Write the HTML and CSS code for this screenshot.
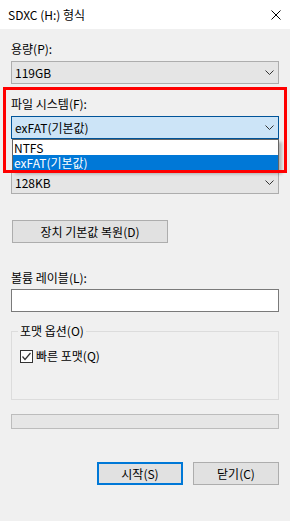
FILE: index.html
```html
<!DOCTYPE html>
<html>
<head>
  <title>SDXC (H:) 형식</title>
  <link rel="stylesheet" href="styles.css">
</head>
<body>
  <div class="window">
    <div class="titlebar">
      <span class="title">SDXC (H:) 형식</span>
      <svg class="close" width="10" height="10" viewBox="0 0 10 10">
        <path d="M0.5 0.5 L9.5 9.5 M9.5 0.5 L0.5 9.5" stroke="#000" stroke-width="1" fill="none"/>
      </svg>
    </div>

    <div class="content">
      <div class="field">
        <label class="field-label">용량(P):</label>
        <div class="combo">
          <span>119GB</span>
          <svg class="arrow" width="9" height="5" viewBox="0 0 9 5"><path d="M0.5 0.5 L4.5 4.5 L8.5 0.5" stroke="#333" fill="none"/></svg>
        </div>
      </div>

      <div class="field">
        <label class="field-label">파일 시스템(F):</label>
        <div class="combo-wrap">
          <div class="combo open">
            <span>exFAT(기본값)</span>
            <svg class="arrow" width="9" height="5" viewBox="0 0 9 5"><path d="M0.5 0.5 L4.5 4.5 L8.5 0.5" stroke="#333" fill="none"/></svg>
          </div>
          <ul class="dropdown">
            <li>NTFS</li>
            <li class="selected">exFAT(기본값)</li>
          </ul>
        </div>
      </div>

      <div class="field">
        <!-- label for this combo is covered by the open dropdown -->
        <div class="field-label label-covered"></div>
        <div class="combo">
          <span>128KB</span>
          <svg class="arrow" width="9" height="5" viewBox="0 0 9 5"><path d="M0.5 0.5 L4.5 4.5 L8.5 0.5" stroke="#333" fill="none"/></svg>
        </div>
      </div>

      <button class="btn btn-restore">장치 기본값 복원(D)</button>

      <label class="field-label volume-label">볼륨 레이블(L):</label>
      <div class="textbox"></div>

      <fieldset class="options">
        <legend>포맷 옵션(O)</legend>
        <div class="check-row">
          <span class="checkbox">
            <svg width="11" height="11" viewBox="0 0 11 11"><path d="M1.5 5.5 L4 8.5 L9.5 2" stroke="#333" stroke-width="1.2" fill="none"/></svg>
          </span>
          <span>빠른 포맷(Q)</span>
        </div>
      </fieldset>

      <div class="progress"></div>

      <div class="actions">
        <button class="btn btn-default">시작(S)</button>
        <button class="btn">닫기(C)</button>
      </div>
    </div>

    <div class="highlight"></div>
  </div>
</body>
</html>
```

FILE: styles.css
```css
body {
  margin: 0;
  font-family: "Noto Sans CJK KR", "Noto Sans", sans-serif;
  font-size: 12px;
  color: #000;
  background-color: #f0f0f0;
}

.window {
  position: relative;
  width: 290px;
  height: 521px;
  background-color: #f0f0f0;
}

.titlebar {
  height: 29px;
  background-color: #fff;
  display: flex;
  align-items: center;
  justify-content: space-between;
  padding: 0 9px 0 8px;
}

.title {
  line-height: 16px;
  margin-top: 1px;
}

.close {
  display: block;
  margin-top: 1px;
}

.content {
  padding: 12px 11px 0;
}

.field {
  margin-bottom: 12px;
}

.field-label {
  display: block;
  line-height: 16px;
  margin-bottom: 4px;
}

.label-covered {
  height: 16px;
}

.combo-wrap {
  position: relative;
}

.combo {
  height: 23px;
  box-sizing: border-box;
  border: 1px solid #adadad;
  background-color: #e5e5e5;
  display: flex;
  align-items: center;
  justify-content: space-between;
  padding: 0 4px 0 3px;
  line-height: 16px;
}

.combo.open {
  background-color: #cce4f7;
  border-color: #005499;
}

.arrow {
  display: block;
}

.dropdown {
  position: absolute;
  top: 23px;
  left: 1px;
  right: 0;
  margin: 0;
  padding: 0;
  list-style: none;
  background-color: #fff;
  border: 1px solid #646464;
  box-shadow: 3px 3px 3px rgba(0, 0, 0, 0.25);
  z-index: 2;
}

.dropdown li {
  line-height: 15px;
  height: 15px;
  padding-left: 1px;
}

.dropdown li.selected {
  background-color: #0078d7;
  color: #fff;
}

.btn {
  font-family: inherit;
  font-size: 12px;
  color: #000;
  height: 23px;
  box-sizing: border-box;
  border: 1px solid #adadad;
  background-color: #e1e1e1;
  padding: 0;
  line-height: 16px;
}

.btn-restore {
  display: block;
  width: 156px;
  margin: 26px 0 0 1px;
}

.volume-label {
  margin-top: 27px;
  margin-bottom: 3px;
}

.textbox {
  height: 23px;
  box-sizing: border-box;
  border: 1px solid #7a7a7a;
  background-color: #fff;
}

.options {
  margin: 11px 0 0;
  padding: 0 8px 35px 6px;
  border: 1px solid #dcdcdc;
}

.options legend {
  padding: 0 2px;
  line-height: 16px;
}

.check-row {
  display: flex;
  align-items: center;
  gap: 3px;
  line-height: 16px;
  margin-top: 9px;
  margin-left: 2px;
}

.checkbox {
  width: 13px;
  height: 13px;
  box-sizing: border-box;
  border: 1px solid #333;
  background-color: #fff;
  display: flex;
  align-items: center;
  justify-content: center;
}

.checkbox svg {
  display: block;
}

.progress {
  margin-top: 14px;
  height: 15px;
  box-sizing: border-box;
  border: 1px solid #bcbcbc;
  background-color: #e6e6e6;
}

.actions {
  display: flex;
  justify-content: flex-end;
  gap: 10px;
  margin-top: 33px;
}

.actions .btn {
  width: 86px;
}

.btn-default {
  border: 2px solid #0078d7;
}

.highlight {
  position: absolute;
  left: 3px;
  top: 87px;
  width: 284px;
  height: 86px;
  box-sizing: border-box;
  border: 3px solid #ff0000;
  z-index: 3;
}
```
